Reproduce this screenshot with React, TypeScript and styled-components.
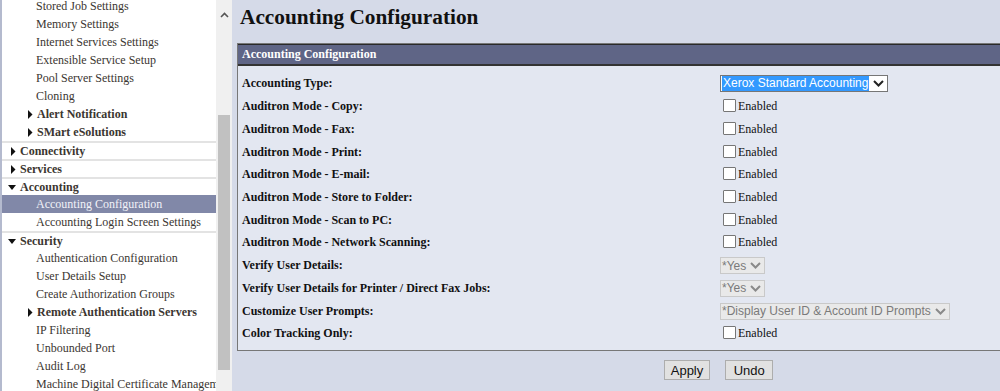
import styled, { createGlobalStyle } from 'styled-components';

const GlobalStyle = createGlobalStyle`
  html, body {
    margin: 0;
    padding: 0;
    overflow: hidden;
    background: #d5dae8;
  }
  body {
    font-family: "Liberation Serif", "Times New Roman", serif;
    color: #222;
  }
`;

const Page = styled.div`
  display: flex;
  height: 391px;
  overflow: hidden;
`;

const Sidebar = styled.nav`
  width: 214px;
  flex: none;
  background: #fff;
  border-left: 2px solid #b4bace;
  overflow: hidden;
`;

const NavList = styled.div`
  margin-top: -3px;
`;

const NavItem = styled.div<{ $level: number; $bold?: boolean; $active?: boolean; $divider?: boolean }>`
  display: flex;
  align-items: center;
  height: ${p => (p.$divider ? 16 : 18)}px;
  padding-left: ${p => (p.$level === 0 ? 6 : p.$bold ? 23 : 34)}px;
  border-top: ${p => (p.$divider ? '2px solid #e3e3e3' : 'none')};
  font-size: 12px;
  font-weight: ${p => (p.$bold ? 700 : 400)};
  color: ${p => (p.$active ? '#f2f2f8' : '#3b3631')};
  background: ${p => (p.$active ? '#8188a8' : 'transparent')};
  white-space: nowrap;
`;

const Caret = styled.span`
  width: 12px;
  display: inline-flex;
  align-items: center;
`;

const ScrollTrack = styled.div`
  width: 16px;
  flex: none;
  background: #f0f0f0;
  display: flex;
  flex-direction: column;
  align-items: center;
`;

const ScrollArrow = styled.div`
  height: 30px;
  display: flex;
  align-items: center;
  justify-content: center;
`;

const ScrollThumb = styled.div`
  width: 12px;
  margin-top: 85px;
  height: 255px;
  background: #c1c1c1;
`;

const Main = styled.main`
  flex: none;
  width: 963px;
  padding-left: 5px;
`;

const Title = styled.h1`
  margin: 4px 0 0 3px;
  font-size: 21.3px;
  line-height: 26px;
  font-weight: 700;
  color: #111;
`;

const Panel = styled.section`
  margin-top: 13px;
  border: 1px solid #777;
  background: #e3e7f1;
`;

const PanelHeader = styled.div`
  height: 19px;
  display: flex;
  align-items: center;
  padding-left: 4px;
  background: #5f6586;
  border-top: 1px solid #2a2a2a;
  border-bottom: 2px solid #333;
  color: #fff;
  font-size: 12px;
  font-weight: 700;
`;

const Rows = styled.div`
  padding: 6.5px 0 5px 4px;
`;

const Row = styled.div`
  display: grid;
  grid-template-columns: 478px 1fr;
  align-items: center;
  height: 22.72px;
`;

const Label = styled.div`
  font-size: 12px;
  font-weight: 700;
  color: #111;
`;

const FakeSelect = styled.div<{ $disabled?: boolean }>`
  display: inline-flex;
  align-items: center;
  gap: 4px;
  height: 15px;
  padding: 0 3px 0 1px;
  border: 1px solid ${p => (p.$disabled ? '#c9c9c9' : '#767676')};
  background: ${p => (p.$disabled ? '#e9e9e9' : '#fff')};
  color: ${p => (p.$disabled ? '#7a7a7a' : '#fff')};
  font-family: "Liberation Sans", Arial, sans-serif;
  font-size: 12px;
  justify-self: start;
`;

const Highlight = styled.span`
  background: #3399ff;
  color: #fff;
  padding: 0 1px;
  line-height: 15px;
`;

const Check = styled.label`
  display: inline-flex;
  align-items: flex-end;
  gap: 2px;
  font-size: 12px;
  color: #111;
  margin-left: 3px;
`;

const Box = styled.span`
  width: 11px;
  height: 11px;
  border: 1px solid #767676;
  background: #fff;
  border-radius: 1px;
  margin-bottom: 2px;
`;

const Buttons = styled.div`
  display: flex;
  justify-content: center;
  gap: 15px;
  margin-top: 9px;
`;

const Button = styled.button<{ $min?: number }>`
  height: 20px;
  min-width: ${p => p.$min ?? 0}px;
  padding: 0 6px;
  background: #e1e1e1;
  border: 1px solid #adadad;
  font-family: "Liberation Sans", Arial, sans-serif;
  font-size: 13px;
  color: #111;
`;

const Chevron = ({ color }: { color: string }) => (
  <svg width="11" height="7" viewBox="0 0 11 7">
    <path d="M1 1l4.5 4.5L10 1" fill="none" stroke={color} strokeWidth="2" />
  </svg>
);

const Triangle = ({ dir }: { dir: 'right' | 'down' }) => (
  <svg width="12" height="9" viewBox="0 0 12 9">
    {dir === 'right' ? <path d="M3 0L7.5 4.5L3 9z" fill="#111" /> : <path d="M0 2h8L4 7z" fill="#111" />}
  </svg>
);

type Nav = { text: string; level: number; bold?: boolean; caret?: 'right' | 'down'; active?: boolean; divider?: boolean };

const nav: Nav[] = [
  { text: 'Stored Job Settings', level: 1 },
  { text: 'Memory Settings', level: 1 },
  { text: 'Internet Services Settings', level: 1 },
  { text: 'Extensible Service Setup', level: 1 },
  { text: 'Pool Server Settings', level: 1 },
  { text: 'Cloning', level: 1 },
  { text: 'Alert Notification', level: 1, bold: true, caret: 'right' },
  { text: 'SMart eSolutions', level: 1, bold: true, caret: 'right' },
  { text: 'Connectivity', level: 0, bold: true, caret: 'right', divider: true },
  { text: 'Services', level: 0, bold: true, caret: 'right', divider: true },
  { text: 'Accounting', level: 0, bold: true, caret: 'down', divider: true },
  { text: 'Accounting Configuration', level: 1, active: true },
  { text: 'Accounting Login Screen Settings', level: 1 },
  { text: 'Security', level: 0, bold: true, caret: 'down', divider: true },
  { text: 'Authentication Configuration', level: 1 },
  { text: 'User Details Setup', level: 1 },
  { text: 'Create Authorization Groups', level: 1 },
  { text: 'Remote Authentication Servers', level: 1, bold: true, caret: 'right' },
  { text: 'IP Filtering', level: 1 },
  { text: 'Unbounded Port', level: 1 },
  { text: 'Audit Log', level: 1 },
  { text: 'Machine Digital Certificate Management', level: 1 },
];

type Field =
  | { label: string; kind: 'select'; value: string; disabled?: boolean }
  | { label: string; kind: 'check' };

const fields: Field[] = [
  { label: 'Accounting Type:', kind: 'select', value: 'Xerox Standard Accounting' },
  { label: 'Auditron Mode - Copy:', kind: 'check' },
  { label: 'Auditron Mode - Fax:', kind: 'check' },
  { label: 'Auditron Mode - Print:', kind: 'check' },
  { label: 'Auditron Mode - E-mail:', kind: 'check' },
  { label: 'Auditron Mode - Store to Folder:', kind: 'check' },
  { label: 'Auditron Mode - Scan to PC:', kind: 'check' },
  { label: 'Auditron Mode - Network Scanning:', kind: 'check' },
  { label: 'Verify User Details:', kind: 'select', value: '*Yes', disabled: true },
  { label: 'Verify User Details for Printer / Direct Fax Jobs:', kind: 'select', value: '*Yes', disabled: true },
  { label: 'Customize User Prompts:', kind: 'select', value: '*Display User ID & Account ID Prompts', disabled: true },
  { label: 'Color Tracking Only:', kind: 'check' },
];

export default function App() {
  return (
    <Page>
      <GlobalStyle />
      <Sidebar>
        <NavList>
          {nav.map(n => (
            <NavItem key={n.text} $level={n.level} $bold={n.bold} $active={n.active} $divider={n.divider}>
              {n.caret && (
                <Caret>
                  <Triangle dir={n.caret} />
                </Caret>
              )}
              {n.text}
            </NavItem>
          ))}
        </NavList>
      </Sidebar>
      <ScrollTrack>
        <ScrollArrow>
          <svg width="9" height="6" viewBox="0 0 9 6">
            <path d="M1 5l3.5-3.5L8 5" fill="none" stroke="#555" strokeWidth="1.6" />
          </svg>
        </ScrollArrow>
        <ScrollThumb />
      </ScrollTrack>
      <Main>
        <Title>Accounting Configuration</Title>
        <Panel>
          <PanelHeader>Accounting Configuration</PanelHeader>
          <Rows>
            {fields.map(f => (
              <Row key={f.label}>
                <Label>{f.label}</Label>
                {f.kind === 'check' ? (
                  <Check>
                    <Box />
                    Enabled
                  </Check>
                ) : (
                  <FakeSelect $disabled={f.disabled}>
                    {f.disabled ? <span>{f.value}</span> : <Highlight>{f.value}</Highlight>}
                    <Chevron color={f.disabled ? '#8a8a8a' : '#222'} />
                  </FakeSelect>
                )}
              </Row>
            ))}
          </Rows>
        </Panel>
        <Buttons>
          <Button>Apply</Button>
          <Button $min={48}>Undo</Button>
        </Buttons>
      </Main>
    </Page>
  );
}
